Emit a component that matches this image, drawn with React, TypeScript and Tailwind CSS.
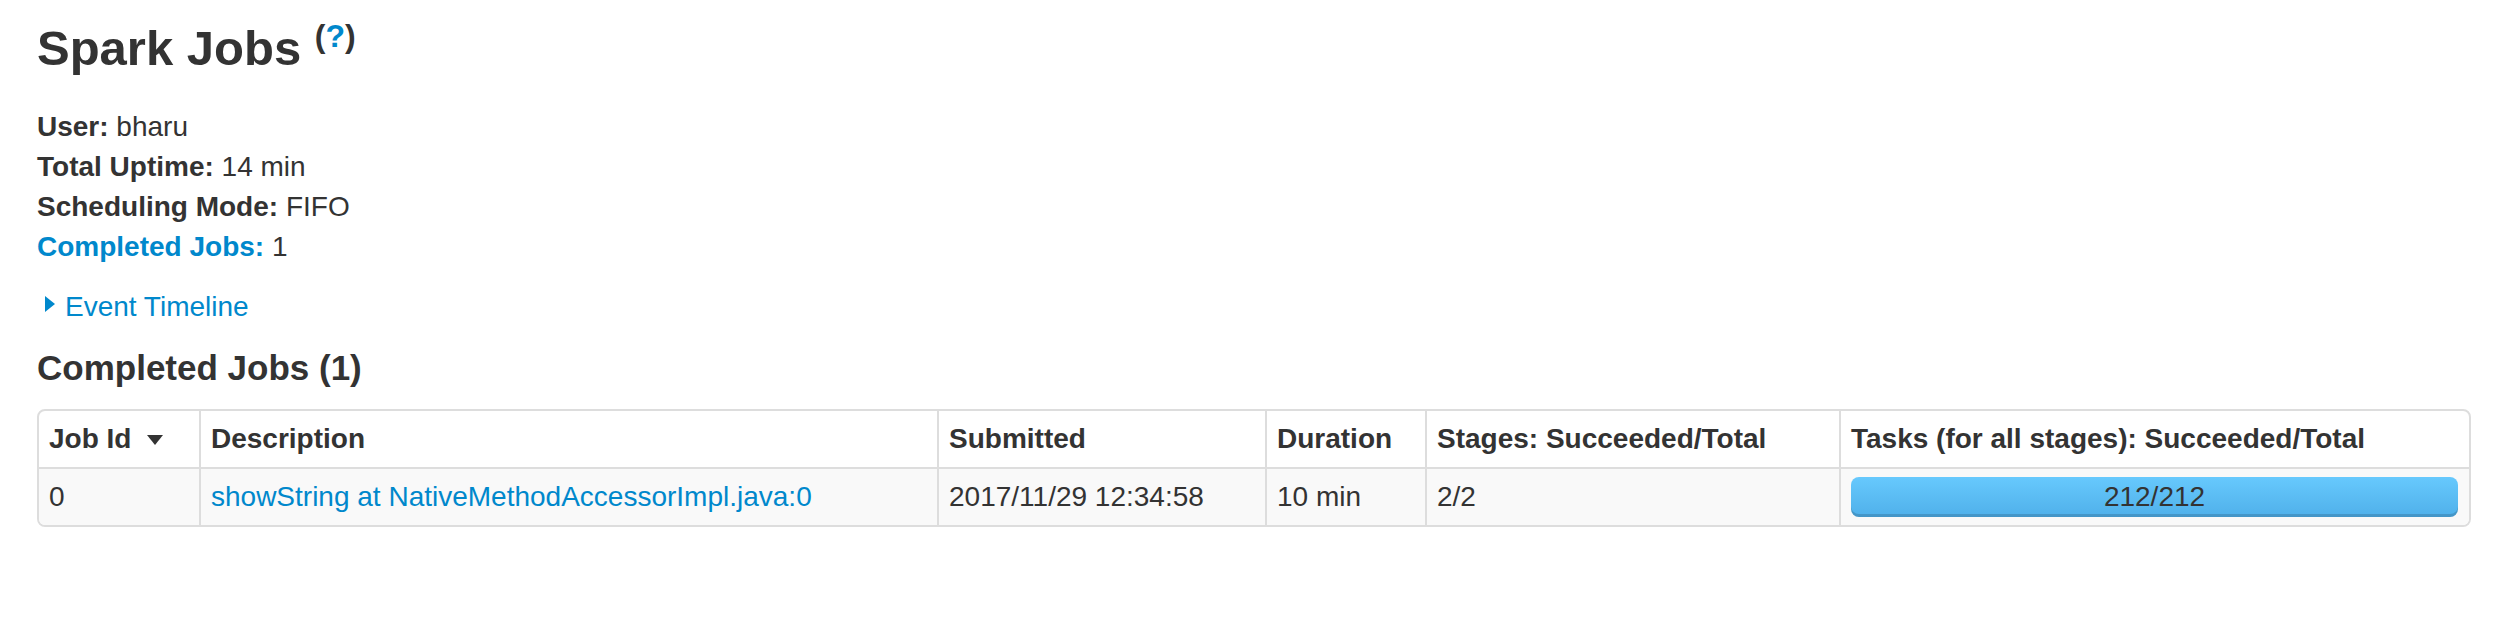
import React from 'react';

const App: React.FC = () => {
  const headers = [
    'Job Id',
    'Description',
    'Submitted',
    'Duration',
    'Stages: Succeeded/Total',
    'Tasks (for all stages): Succeeded/Total',
  ];

  return (
    <div className="min-h-screen bg-white font-['Liberation_Sans',Arial,sans-serif] text-[28px] leading-[40px] text-[#333]">
      <div className="pl-[37px] pt-[8px]">
        <h3 className="text-[49px] leading-[80px] font-bold">
          Spark Jobs{' '}
          <sup className="text-[32px] top-[-18px]">
            (<a className="text-[#0088cc]">?</a>)
          </sup>
        </h3>

        {/* Summary */}
        <ul className="mt-[19px]">
          <li>
            <strong>User:</strong> bharu
          </li>
          <li>
            <strong>Total Uptime:</strong> 14 min
          </li>
          <li>
            <strong>Scheduling Mode:</strong> FIFO
          </li>
          <li>
            <a className="font-bold text-[#0088cc]">Completed Jobs:</a> 1
          </li>
        </ul>

        <div className="mt-[20px] flex items-center text-[#0088cc]">
          <span className="ml-[8px] mr-[10px] mb-[6px] inline-block h-0 w-0 border-y-[8px] border-l-[10px] border-y-transparent border-l-[#0088cc]" />
          <a>Event Timeline</a>
        </div>

        <h4 className="mt-[21px] text-[35px] leading-[40px] font-bold">Completed Jobs (1)</h4>

        {/* Jobs table */}
        <div className="mt-[21px] w-[2434px] overflow-hidden rounded-[8px] border-2 border-[#ddd]">
          <table className="w-full table-fixed border-separate border-spacing-0">
            <colgroup>
              <col className="w-[160px]" />
              <col className="w-[738px]" />
              <col className="w-[328px]" />
              <col className="w-[160px]" />
              <col className="w-[414px]" />
              <col />
            </colgroup>
            <thead>
              <tr>
                {headers.map((h, i) => (
                  <th
                    key={h}
                    className={`px-[10px] py-[8px] text-left align-bottom font-bold whitespace-nowrap ${
                      i > 0 ? 'border-l-2 border-[#ddd]' : ''
                    }`}
                  >
                    {h}
                    {i === 0 && (
                      <span className="ml-[16px] mb-[3px] inline-block h-0 w-0 border-x-[8px] border-t-[10px] border-x-transparent border-t-[#333]" />
                    )}
                  </th>
                ))}
              </tr>
            </thead>
            <tbody>
              <tr className="bg-[#f9f9f9]">
                <td className="border-t-2 border-[#ddd] px-[10px] py-[8px] align-top">0</td>
                <td className="border-t-2 border-l-2 border-[#ddd] px-[10px] py-[8px] align-top whitespace-nowrap">
                  <a className="text-[#0088cc]">showString at NativeMethodAccessorImpl.java:0</a>
                </td>
                <td className="border-t-2 border-l-2 border-[#ddd] px-[10px] py-[8px] align-top whitespace-nowrap">
                  2017/11/29 12:34:58
                </td>
                <td className="border-t-2 border-l-2 border-[#ddd] px-[10px] py-[8px] align-top whitespace-nowrap">
                  10 min
                </td>
                <td className="border-t-2 border-l-2 border-[#ddd] px-[10px] py-[8px] align-top">2/2</td>
                <td className="border-t-2 border-l-2 border-[#ddd] pl-[10px] pr-[11px] py-[8px] align-top">
                  <div className="flex h-[40px] items-center justify-center rounded-[8px] bg-gradient-to-b from-[#67c9fd] to-[#4fb0ea] shadow-[inset_0_-3px_0_rgba(0,0,0,0.15)]">
                    212/212
                  </div>
                </td>
              </tr>
            </tbody>
          </table>
        </div>
      </div>
    </div>
  );
};

export default App;
